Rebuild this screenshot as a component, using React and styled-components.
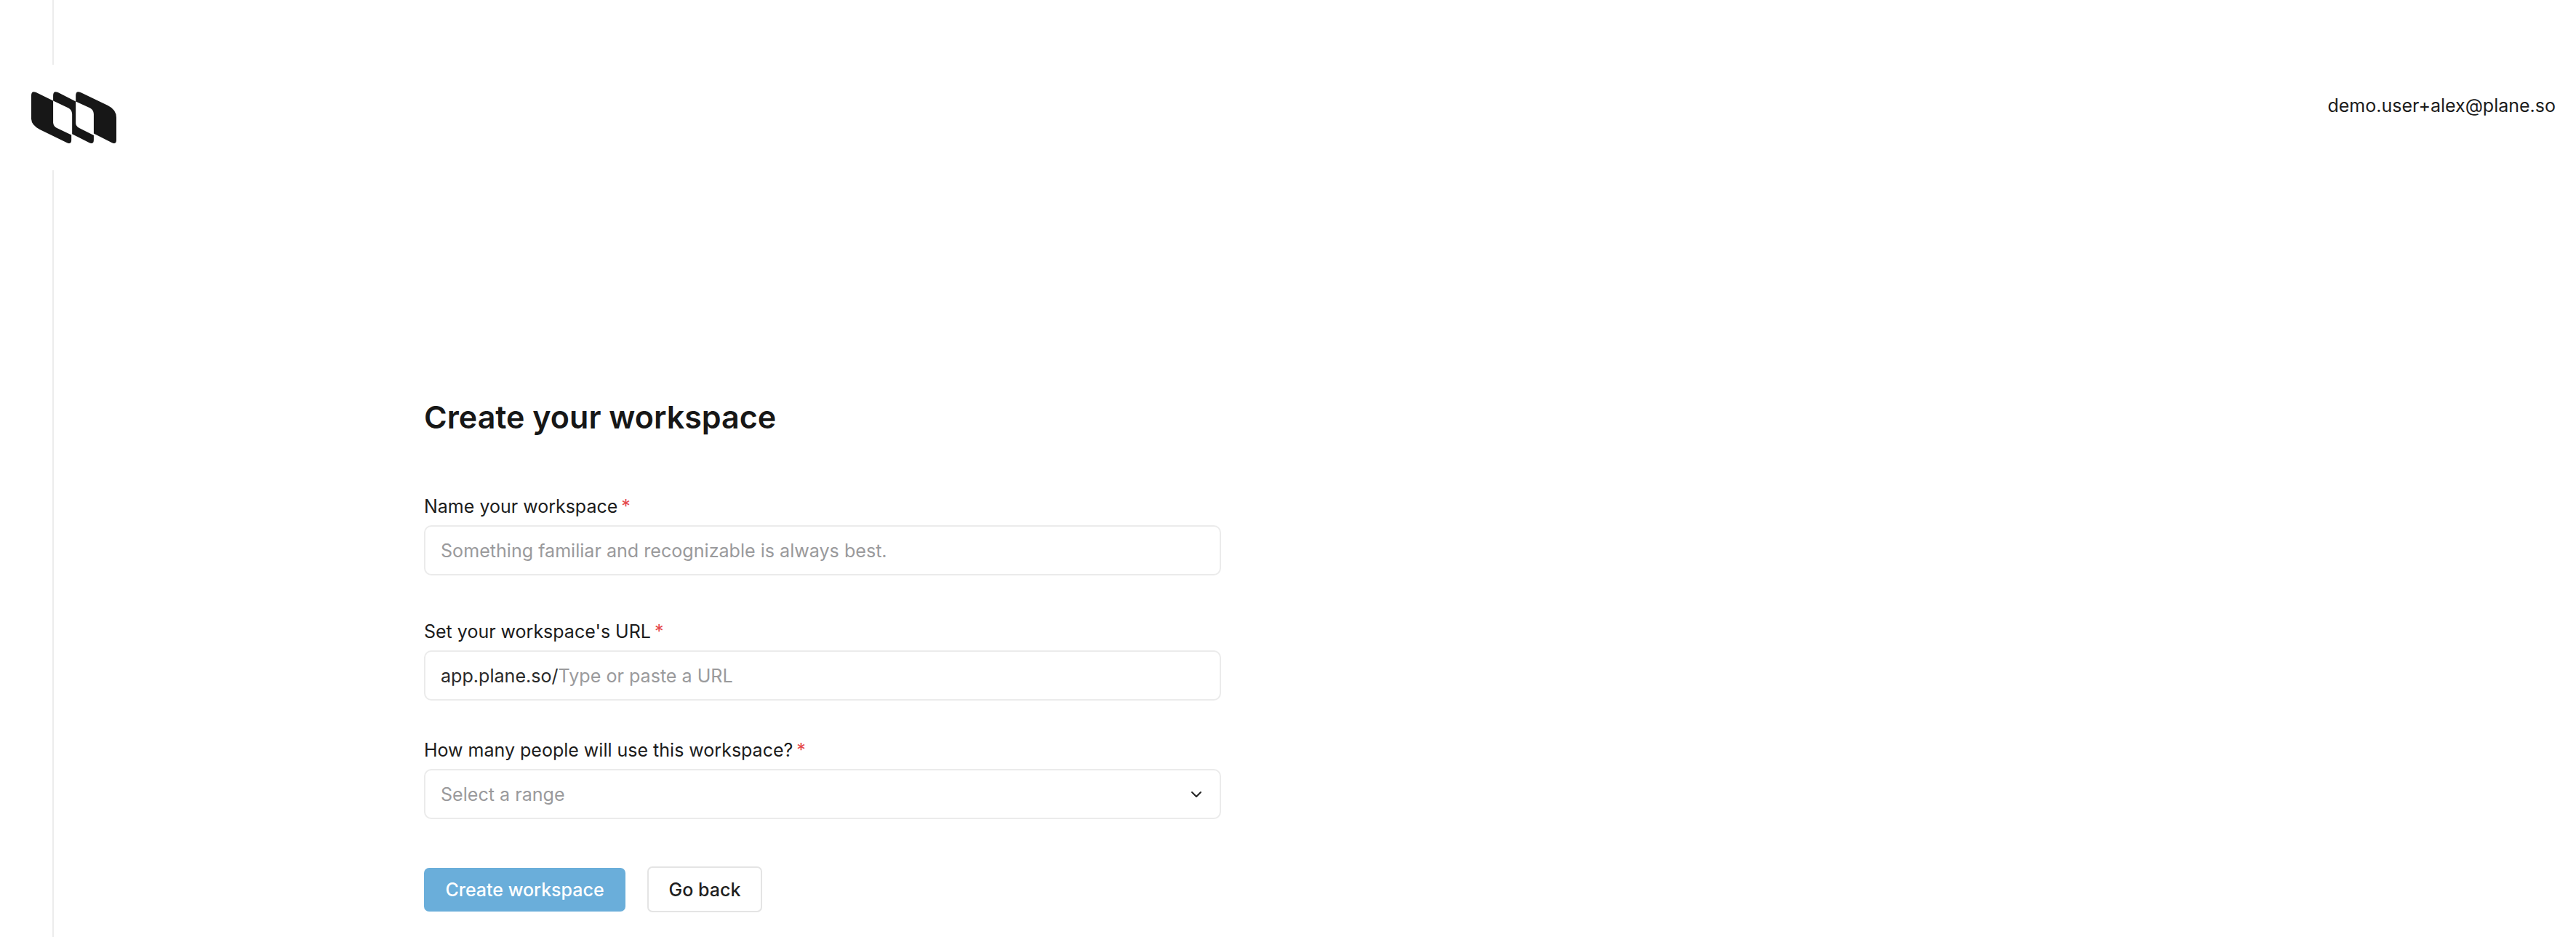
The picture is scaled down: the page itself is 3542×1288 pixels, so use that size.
import React from "react";
import styled, { createGlobalStyle } from "styled-components";

const Global = createGlobalStyle`
  html, body { margin: 0; padding: 0; background: #fff; }
  body { font-family: Inter, "Noto Sans", sans-serif; color: #1c1c1c; }
`;

const Page = styled.div`
  position: relative;
  width: 3542px;
  height: 1288px;
  overflow: hidden;
  background: #fff;
  &::before {
    content: "";
    position: absolute;
    left: 72px;
    top: 0;
    bottom: 0;
    width: 2px;
    background: #ececec;
  }
`;

const Header = styled.header`
  position: relative;
  display: flex;
  align-items: flex-start;
  justify-content: space-between;
  padding: 89px 28px 0 43px;
  height: 145px;
`;

const LogoWrap = styled.div`
  display: flex;
  align-items: center;
  height: 145px;
  width: 117px;
  background: #fff;
  padding: 0 12px 0 0;
  box-sizing: content-box;
`;

const Email = styled.div`
  font-size: 25px;
  line-height: 35px;
  margin-top: 39px;
  color: #1c1c1c;
`;

const Main = styled.main`
  position: relative;
  width: 1096px;
  margin-left: 583px;
  padding-top: 313px;
  display: flex;
  flex-direction: column;
`;

const Title = styled.h1`
  margin: 0 0 79px;
  font-size: 43px;
  line-height: 53px;
  font-weight: 600;
  color: #171717;
`;

const Field = styled.div`
  display: flex;
  flex-direction: column;
  gap: 8px;
  margin-bottom: ${(p) => p.$gap}px;
`;

const Label = styled.label`
  display: flex;
  gap: 5px;
  font-size: 25px;
  line-height: 35px;
  color: #1c1c1c;
`;

const Star = styled.span`
  color: #e5484d;
`;

const Box = styled.div`
  box-sizing: border-box;
  display: flex;
  align-items: center;
  justify-content: space-between;
  height: 69px;
  padding: 0 24px 0 21px;
  border: 2px solid #ebebeb;
  border-radius: 10px;
  font-size: 25.1px;
  background: #fff;
`;

const Placeholder = styled.span`
  color: #9a9a9c;
`;

const Prefix = styled.span`
  color: #2a2a2a;
`;

const Actions = styled.div`
  display: flex;
  align-items: center;
  gap: 30px;
  margin-top: 4px;
`;

const Primary = styled.button`
  height: 60px;
  width: 277px;
  border: 0;
  border-radius: 7px;
  background: #6aaeda;
  color: #fff;
  font: 500 25px Inter, sans-serif;
`;

const Secondary = styled.button`
  box-sizing: border-box;
  height: 63px;
  width: 158px;
  border: 2px solid #e4e4e4;
  border-radius: 7px;
  background: #fff;
  color: #1f1f1f;
  font: 500 25px Inter, sans-serif;
`;

const Logo = () => (
  <svg width="117" height="71" viewBox="130 378 350 212" fill="#171717">
    <path d="M130 394Q130 372 150 381L220 415V505Q221 519 234 527L295 556V576Q295 596 277 588L165 533Q131 516 130 490Z" />
    <path d="M220 394Q220 372 240 381L313 418V508Q314 520 326 527L387 557V576Q387 596 369 588L298 552V470Q297 452 283 445L220 415Z" />
    <path d="M313 394Q313 372 333 381L445 435Q480 452 480 485V576Q480 596 462 588L387 550V470Q386 452 372 445L313 418Z" />
  </svg>
);

const Chevron = () => (
  <svg width="16" height="16" viewBox="0 0 16 16" fill="none" stroke="#222" strokeWidth="2" strokeLinecap="round" strokeLinejoin="round">
    <path d="M2 5L8 11L14 5" />
  </svg>
);

export default function App() {
  return (
    <Page>
      <Global />
      <Header>
        <LogoWrap><Logo /></LogoWrap>
        <Email>demo.user+alex@plane.so</Email>
      </Header>
      <Main>
        <Title>Create your workspace</Title>
        <Field $gap={60}>
          <Label>Name your workspace<Star>*</Star></Label>
          <Box><Placeholder>Something familiar and recognizable is always best.</Placeholder></Box>
        </Field>
        <Field $gap={51}>
          <Label>Set your workspace's URL<Star>*</Star></Label>
          <Box><span><Prefix>app.plane.so/</Prefix><Placeholder>Type or paste a URL</Placeholder></span></Box>
        </Field>
        <Field $gap={61}>
          <Label>How many people will use this workspace?<Star>*</Star></Label>
          <Box><Placeholder>Select a range</Placeholder><Chevron /></Box>
        </Field>
        <Actions>
          <Primary>Create workspace</Primary>
          <Secondary>Go back</Secondary>
        </Actions>
      </Main>
    </Page>
  );
}
